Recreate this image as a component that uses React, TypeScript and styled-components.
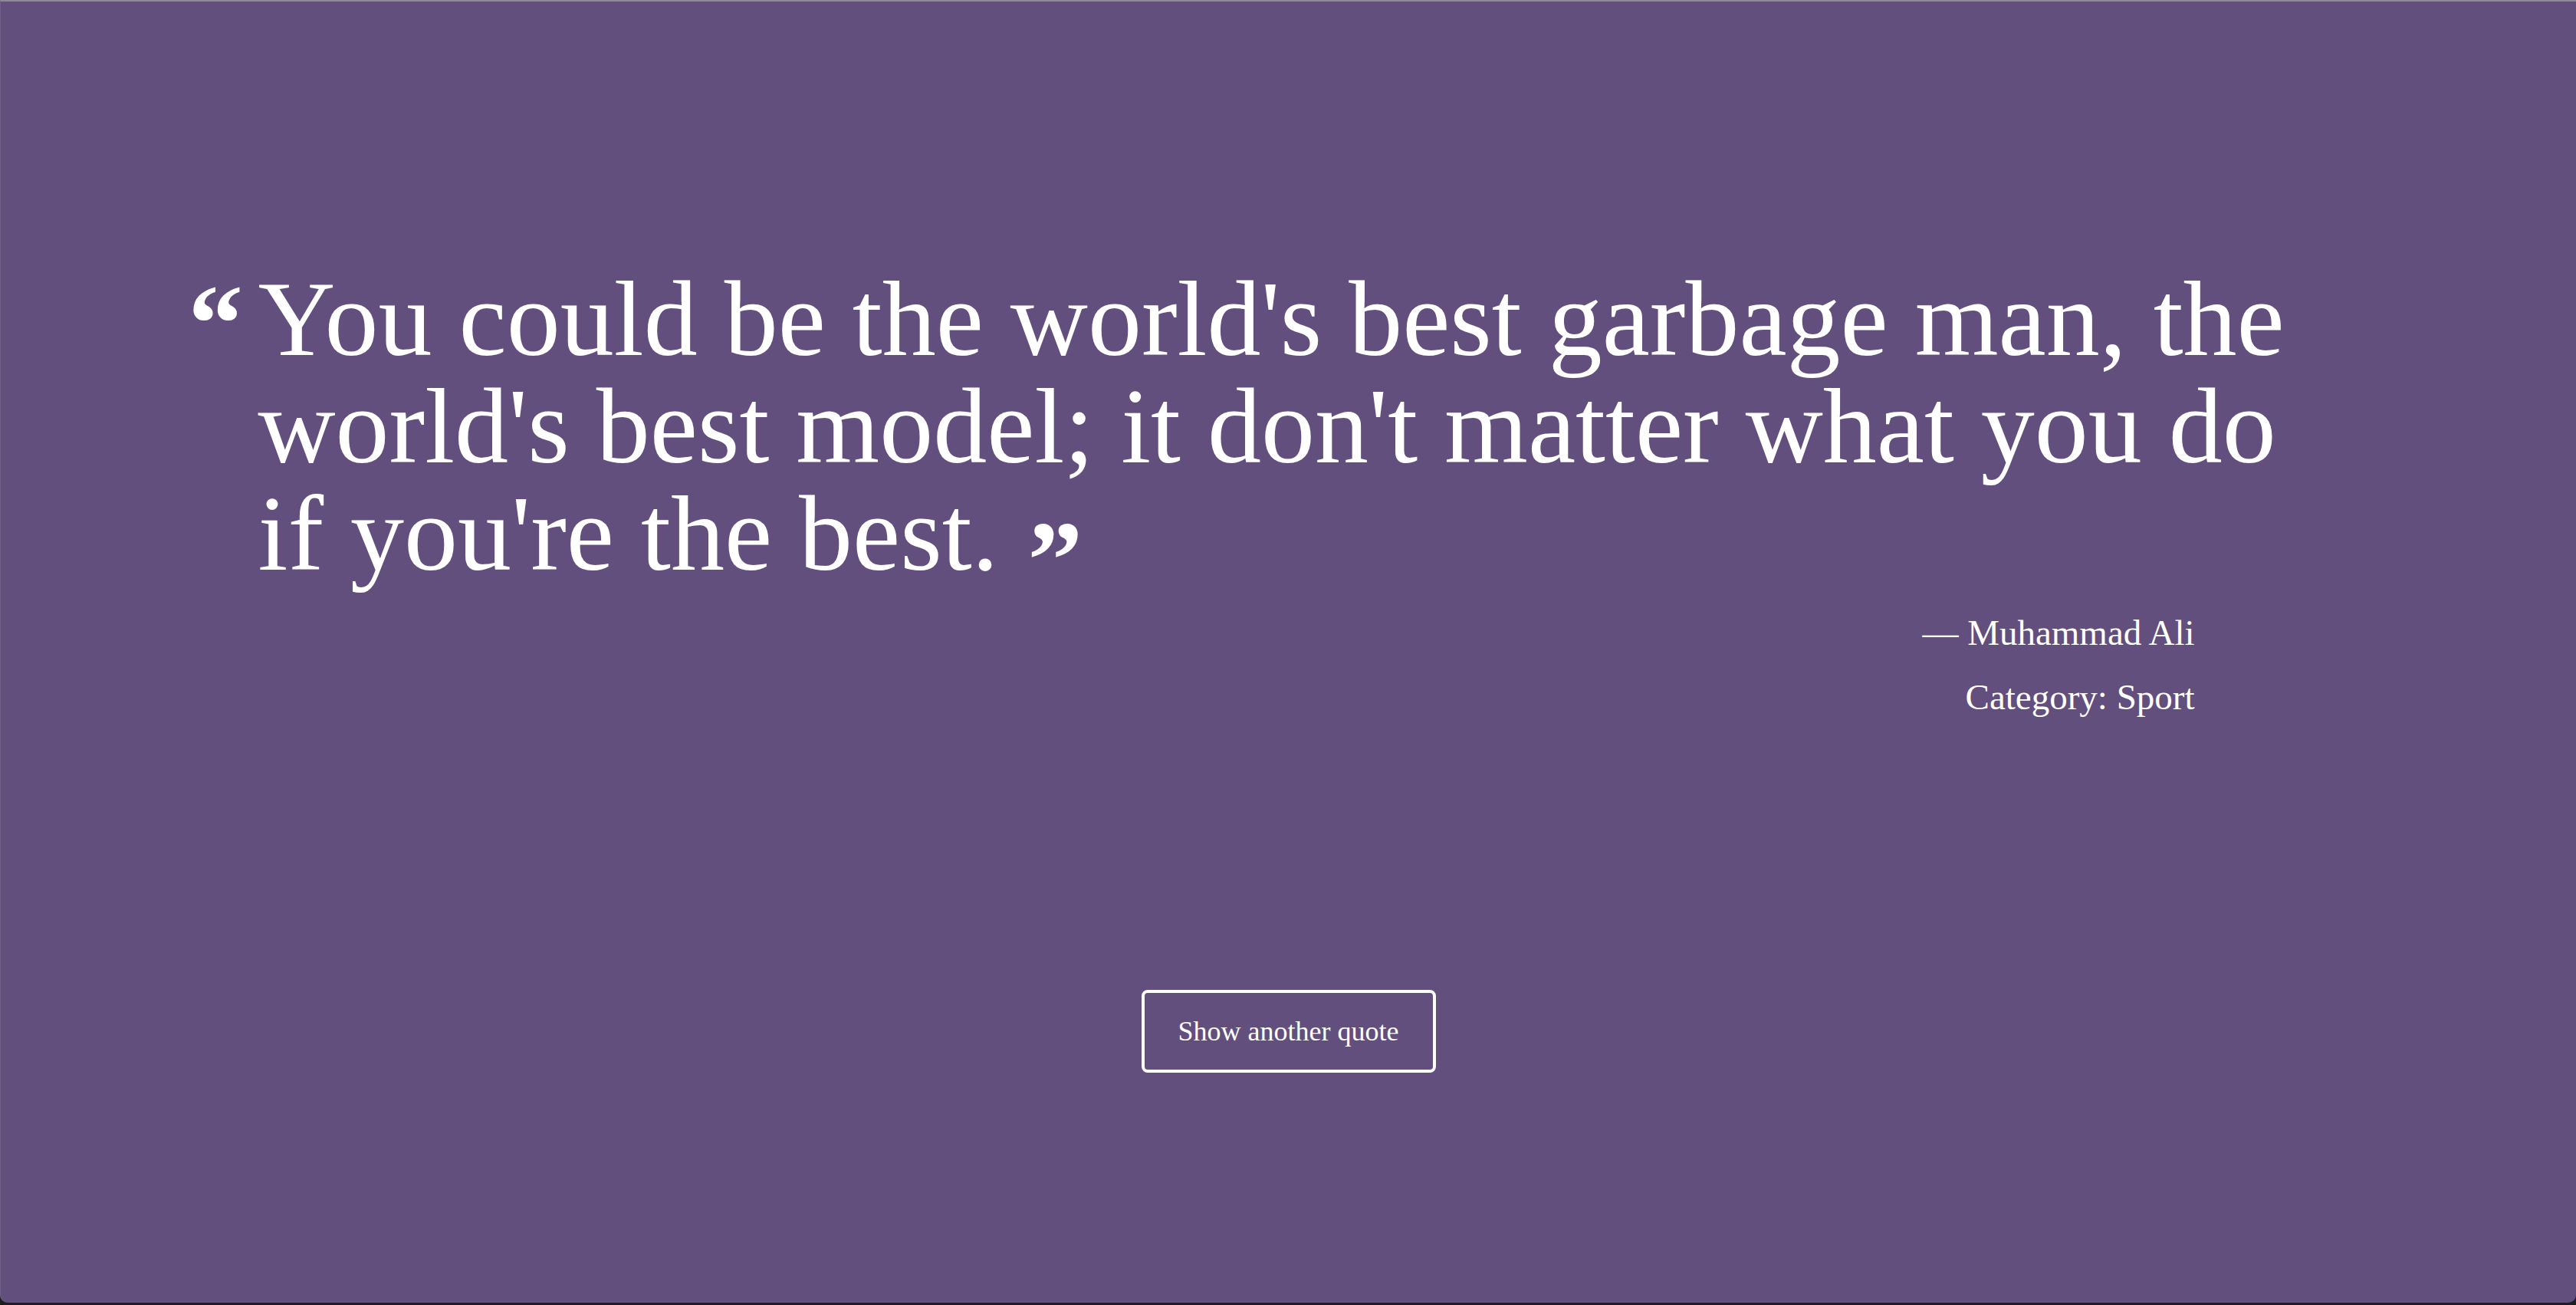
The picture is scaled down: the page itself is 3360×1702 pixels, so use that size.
import React from "react";
import styled, { createGlobalStyle } from "styled-components";

const GlobalStyle = createGlobalStyle`
  html, body {
    margin: 0;
    padding: 0;
    background: #1c1e20;
  }
  body {
    font-family: "Liberation Serif", "Times New Roman", serif;
  }
  #root {
    min-height: 100vh;
  }
`;

const Frame = styled.main`
  box-sizing: border-box;
  height: calc(100vh - 3px);
  background: #624f7e;
  border-top: 2px solid #8c8c8c;
  border-left: 1px solid #6f6188;
  border-radius: 0 0 10px 10px;
  display: flex;
  flex-direction: column;
  align-items: center;
  padding-top: 344px;
  color: #ffffff;
`;

const QuoteBlock = styled.section`
  position: relative;
  width: 2688px;
  display: flex;
  flex-direction: column;
`;

const QuoteText = styled.blockquote`
  margin: 0;
  font-family: "Liberation Serif", "Times New Roman", serif;
  font-size: 140px;
  line-height: 140px;
  font-weight: 400;
  color: #ffffff;
`;

const QuoteMark = styled.span<{ $closing?: boolean }>`
  font-family: "Liberation Serif", "Times New Roman", serif;
  font-weight: 700;
  font-size: 143px;
  color: #ffffff;
  ${({ $closing }) =>
    $closing
      ? `
    display: inline-block;
    line-height: 0;
    margin-left: 38px;
    vertical-align: -36px;
  `
      : `
    line-height: 143px;
    position: absolute;
    left: -91px;
    top: 5px;
  `}
`;

const Attribution = styled.div`
  margin-top: 17px;
  padding-right: 162px;
  display: flex;
  flex-direction: column;
  align-items: flex-end;
  font-family: "Liberation Serif", "Times New Roman", serif;
  font-size: 47px;
  line-height: 84px;
  color: #ffffff;
`;

const AttributionLine = styled.span``;

const NextButton = styled.button`
  margin-top: 340px;
  box-sizing: border-box;
  width: 384px;
  height: 108px;
  background: transparent;
  border: 4px solid #ffffff;
  border-radius: 8px;
  color: #ffffff;
  font-family: "Liberation Serif", "Times New Roman", serif;
  font-size: 36px;
  cursor: pointer;
  display: flex;
  align-items: center;
  justify-content: center;
  padding: 0;
`;

export default function App() {
  return (
    <>
      <GlobalStyle />
      <Frame>
        <QuoteBlock>
          <QuoteMark aria-hidden="true">“</QuoteMark>
          <QuoteText>
            You could be the world's best garbage man, the world's best model;
            it don't matter what you do if you're the best.
            <QuoteMark $closing aria-hidden="true">”</QuoteMark>
          </QuoteText>
          <Attribution>
            <AttributionLine>— Muhammad Ali</AttributionLine>
            <AttributionLine>Category: Sport</AttributionLine>
          </Attribution>
        </QuoteBlock>
        <NextButton type="button">Show another quote</NextButton>
      </Frame>
    </>
  );
}
